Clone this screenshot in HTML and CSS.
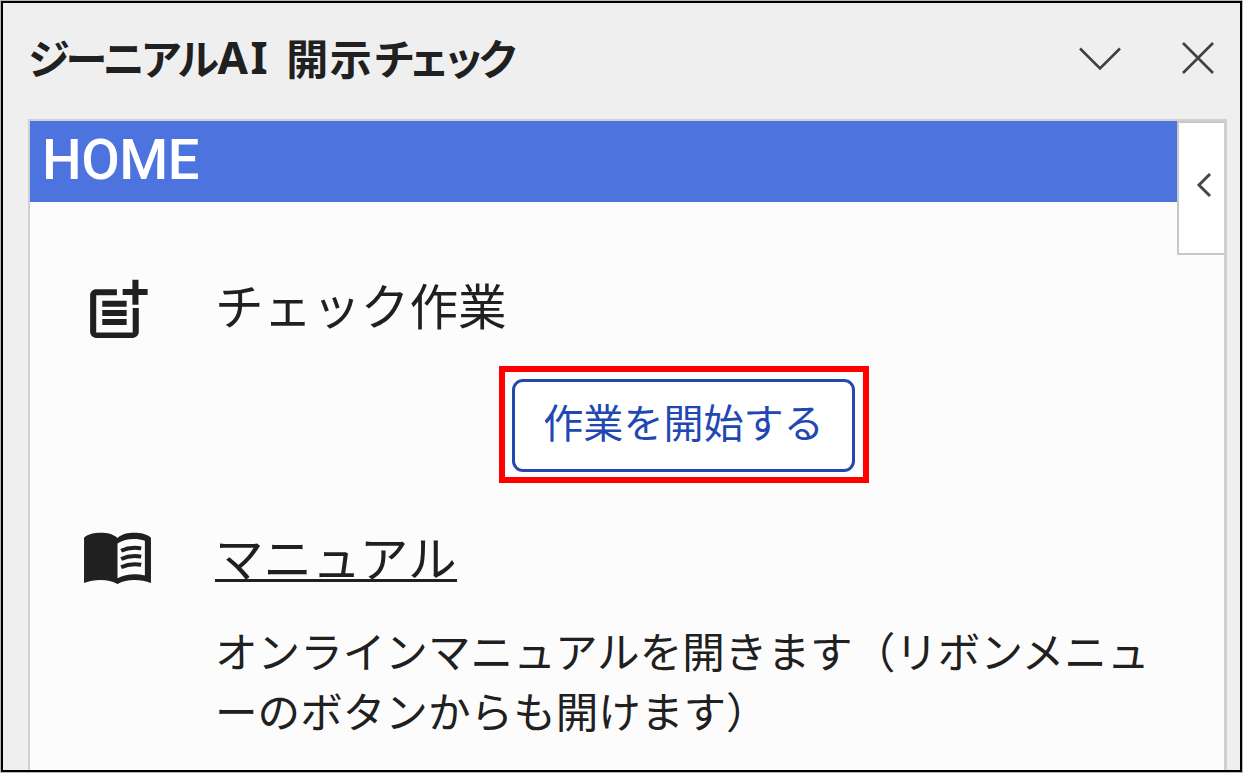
FILE: index.html
```html
<!DOCTYPE html>
<html lang="ja">
<head>
<meta charset="utf-8">
<title>ジーニアルAI 開示チェック</title>
<link rel="stylesheet" href="styles.css">
</head>
<body>
<div class="pane">
  <header class="pane-header">
    <h1 class="pane-title"><span class="kana">ジーニアル</span><span class="latin">AI</span><span class="kanji">開示</span><span class="kana kana-end">チェック</span></h1>
    <svg class="collapse" width="44" height="26" viewBox="0 0 44 26"><path d="M2 2.500 22 22.500 42 2.500"/></svg>
    <svg class="close" width="34" height="34" viewBox="0 0 34 34"><path d="M2 2 32 32M32 2 2 32"/></svg>
  </header>
  <main class="content">
    <div class="main-column">
      <div class="home-bar">HOME</div>
      <section class="row row-check">
        <svg class="icon" viewBox="0 0 24 24"><path d="M17 19.200H5V7h6.800V5H5c-1.100 0-2 .9-2 2v12c0 1.100.9 2 2 2h12c1.100 0 2-.9 2-2v-7.800h-2zM18.900 1.900h-2v3h-3.200v2h3.200v3.200h2V6.900h3v-2h-3zM7 8.800h8v2H7zM7 11.800h8v2H7zM7 14.800h8v2H7z"/></svg>
        <h2 class="row-title">チェック作業</h2>
      </section>
      <div class="highlight"><button class="start">作業を開始する</button></div>
      <section class="row row-manual">
        <svg class="icon" viewBox="0 0 24 24"><path d="M12 5.600C10.500 4.300 8.600 3.900 6.500 3.900S2.400 4.300 1 5.500V20.400C2.600 19.700 4.500 19.400 6.500 19.400S10.500 19.800 12 20.700C13.500 19.800 15.500 19.400 17.500 19.400S21.400 19.700 23 20.400V5.500C21.500 4.300 19.600 3.900 17.500 3.900S13.500 4.300 12 5.600zM21 17.900C18 17.200 14.500 17.500 12 18.800V7.400C14.500 5.800 18 5.500 21 6.500z"/><path class="lines" d="M13.200 9.800C15.300 8.800 17.500 8.600 19.800 9M13.200 12.500C15.300 11.500 17.500 11.300 19.800 11.700M13.200 15.200C15.300 14.200 17.500 14 19.800 14.400"/></svg>
        <div>
          <h2 class="row-title"><a class="manual-link">マニュアル</a></h2>
          <p class="desc">オンラインマニュアルを開きます（リボンメニュ<br>ーのボタンからも開けます）</p>
        </div>
      </section>
    </div>
    <aside class="drawer-tab"><svg width="16" height="26" viewBox="0 0 16 26"><path d="M14 2 3 13 14 24"/></svg></aside>
  </main>
</div>
</body>
</html>
```
FILE: styles.css
```css
* { box-sizing: border-box; }
body { margin: 0; background: #b5bcb5; font-family: "Noto Sans CJK JP", sans-serif; color: #202020; }
h1, h2, p { margin: 0; font-weight: 400; }
.pane { width: 1241px; height: 771px; margin: 1px; border: 2px solid #000; background: #efefef; overflow: hidden; display: flex; flex-direction: column; }
.pane-header { height: 116px; flex: none; display: flex; align-items: flex-start; padding-left: 25px; }
.pane-title { display: flex; width: 1050px; height: 62px; margin-top: 23px; font-size: 42px; line-height: 62px; font-weight: 700; white-space: nowrap; }
.kana { letter-spacing: -4.600px; }
.kana-end { letter-spacing: -7.200px; }
.latin { font-family: "Noto Sans", sans-serif; font-size: 44px; letter-spacing: 2.500px; margin: 0 16px 0 3px; }
.kanji { letter-spacing: 1.500px; }
.pane-header svg { fill: none; stroke: #404040; stroke-width: 2.600; }
.collapse { margin: 43px 59px 0 0; }
.close { margin-top: 38px; }
.content { width: 1199px; flex: 1; min-height: 0; margin-left: 25px; border: solid #d0d0d0; border-width: 2px 3px 0 2px; background: #fcfcfc; display: flex; align-items: flex-start; }
.main-column { width: 1147px; flex: none; }
.home-bar { height: 81px; padding-left: 12px; background: #4d73de; color: #fff; font: 500 56px/78px Roboto, sans-serif; letter-spacing: -0.500px; }
.row { display: flex; padding-left: 51px; }
.icon { width: 73px; height: 73px; flex: none; fill: #202020; }
.lines { fill: none; stroke: #202020; stroke-width: 1.300; }
.row-check { height: 164px; padding-top: 72px; }
.row-check .row-title { margin-top: -6px; }
.row-title { margin-left: 61px; font-size: 48.600px; line-height: 72px; white-space: nowrap; }
.highlight { width: 370px; height: 117px; margin-left: 469px; border: 6px solid #f00; padding: 7px; }
.start { display: block; width: 343px; height: 93px; padding: 0 0 9px; border: 3px solid #2349b0; border-radius: 11px; background: #fff; color: #2148b2; font: 400 40.100px/78px "Noto Sans CJK JP", sans-serif; white-space: nowrap; }
.row-manual { padding-top: 38px; }
.row-manual .row-title { height: 63px; margin-top: -1px; }
.manual-link { display: inline-block; height: 61px; line-height: 70px; border-bottom: 3px solid #202020; }
.desc { margin: 37px 0 0 61px; font-size: 42.600px; line-height: 60px; white-space: nowrap; }
.drawer-tab { width: 47px; height: 134px; border: solid #c8c8c8; border-width: 2px 0 2px 2px; background: #fff; display: flex; padding: 49px 0 0 17px; }
.drawer-tab svg { fill: none; stroke: #484848; stroke-width: 3; }
```
